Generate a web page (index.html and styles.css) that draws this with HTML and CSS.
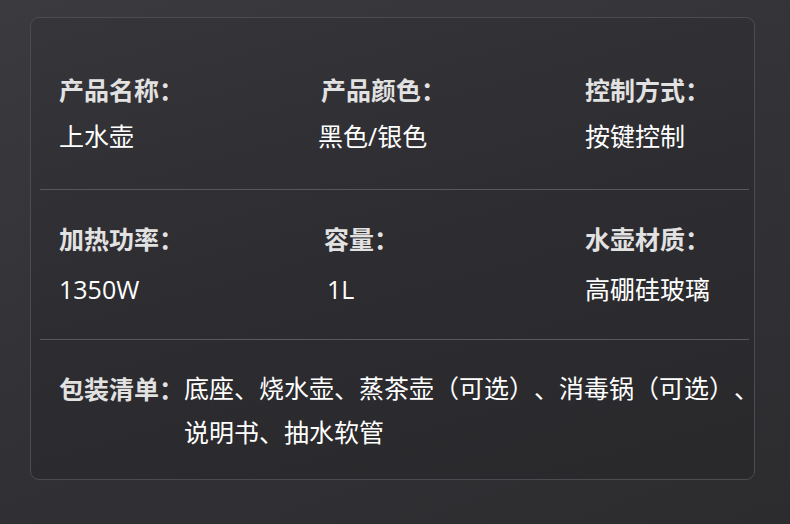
FILE: index.html
```html
<!DOCTYPE html>
<html lang="zh-CN">
<head>
<meta charset="utf-8">
<title>产品参数</title>
<link rel="stylesheet" href="styles.css">
</head>
<body>
<div class="page">
  <section class="card">
    <div class="row row-first">
      <div class="cell">
        <div class="label">产品名称：</div>
        <div class="value">上水壶</div>
      </div>
      <div class="cell">
        <div class="label">产品颜色：</div>
        <div class="value value-shift">黑色/银色</div>
      </div>
      <div class="cell">
        <div class="label">控制方式：</div>
        <div class="value">按键控制</div>
      </div>
    </div>
    <div class="divider"></div>
    <div class="row row-second">
      <div class="cell">
        <div class="label">加热功率：</div>
        <div class="value">1350W</div>
      </div>
      <div class="cell cell-nudge">
        <div class="label">容量：</div>
        <div class="value value-nudge">1L</div>
      </div>
      <div class="cell">
        <div class="label">水壶材质：</div>
        <div class="value">高硼硅玻璃</div>
      </div>
    </div>
    <div class="divider"></div>
    <div class="list-row">
      <div class="label list-label">包装清单：</div>
      <div class="value list-value">底座、烧水壶、蒸茶壶（可选）、消毒锅（可选）、说明书、抽水软管</div>
    </div>
  </section>
</div>
</body>
</html>
```

FILE: styles.css
```css
html, body {
  margin: 0;
  padding: 0;
}

body {
  width: 790px;
  height: 524px;
  overflow: hidden;
  background: linear-gradient(160deg, #3b3a3e 0%, #333236 45%, #2c2b2e 100%);
  font-family: "Noto Sans CJK SC", "Noto Sans", sans-serif;
}

.page {
  padding: 17px 35px 0 30px;
}

.card {
  box-sizing: border-box;
  width: 725px;
  height: 463px;
  border: 1px solid #4c4b4f;
  border-radius: 9px;
  background: linear-gradient(165deg, #363539 0%, #2d2c30 50%, #29282b 100%);
  padding: 21px 5px 0 9px;
}

.row {
  display: grid;
  grid-template-columns: 262px 264px 1fr;
  padding: 28px 0 30px 19px;
}

.row-first .value {
  margin-top: 2px;
}

.row-second {
  padding: 26px 0 27px 19px;
}

.row-second .value {
  margin-top: 6px;
}

.cell {
  display: flex;
  flex-direction: column;
}

.cell-nudge .label {
  padding-left: 3px;
}

.value-nudge {
  padding-left: 6px;
}

.value-shift {
  margin-left: -3px;
}

.label {
  font-size: 25px;
  line-height: 45px;
  font-weight: 700;
  color: #e2e2e2;
  white-space: nowrap;
  text-spacing-trim: space-all;
}

.value {
  font-family: "Open Sans", "Noto Sans CJK SC", sans-serif;
  font-size: 25px;
  line-height: 45px;
  font-weight: 400;
  color: #ffffff;
  text-spacing-trim: space-all;
}

.divider {
  height: 1px;
  background: #58575b;
}

.list-row {
  display: flex;
  padding: 26px 0 0 19px;
}

.list-label {
  flex: 0 0 123px;
}

.list-row .value {
  line-height: 44px;
}

.list-value {
  flex: 0 0 580px;
}
```
